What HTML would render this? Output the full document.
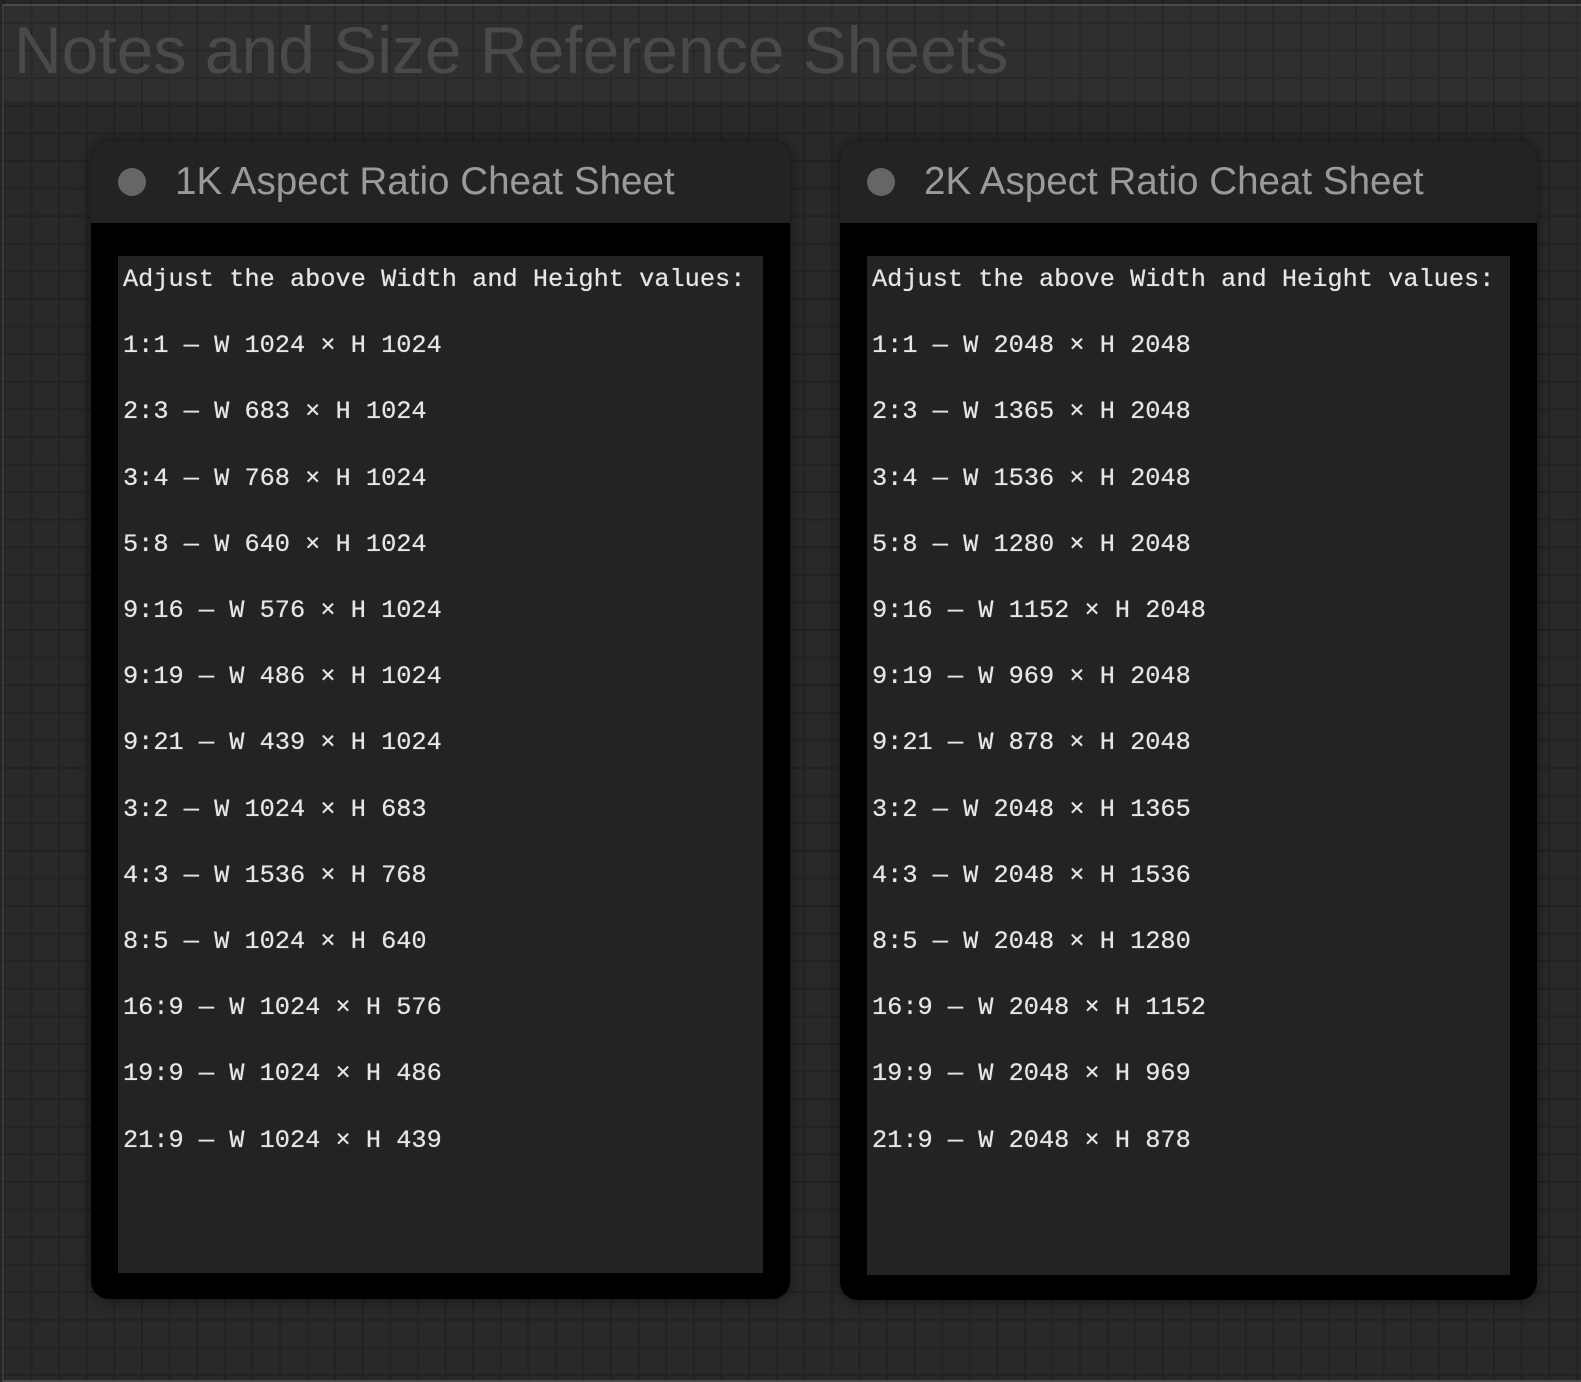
<!DOCTYPE html>
<html><head><style>
html,body{margin:0;padding:0;}
body{width:1581px;height:1381px;overflow:hidden;background-color:#262626;
background-image:linear-gradient(#1f1f1f 2px,transparent 2px),linear-gradient(90deg,#1f1f1f 2px,transparent 2px);
background-size:27.6px 27.6px;background-position:3px 22px;position:relative;font-family:"Liberation Sans",sans-serif;}
.group{position:absolute;left:2px;top:4px;width:1577px;height:1374px;border-top:2px solid #4a4a4a;border-left:2px solid #3a3a3a;border-bottom:2px solid #4a4a4a;background:rgba(255,255,255,0.015);}
.gh{position:absolute;left:0;top:0;right:0;height:95px;background:rgba(255,255,255,0.03);}
.gt{position:absolute;left:10px;top:6px;font-size:66px;color:#4a4a4a;white-space:nowrap;}
.node{position:absolute;top:141px;background:#000;border-radius:18px;box-shadow:0 0 12px rgba(0,0,0,.5);overflow:hidden;}
.hd{height:82px;background:#232323;position:relative;}
.dot{position:absolute;left:27px;top:27px;width:28px;height:28px;border-radius:50%;background:#666;}
.ht{position:absolute;left:84px;top:19px;font-size:38.6px;color:#9a9a9a;white-space:nowrap;}
.ta{position:absolute;left:27px;top:115px;background:#232323;}
pre{margin:-9px 0 0 0;padding:0 0 0 5px;font-family:"Liberation Mono",monospace;font-size:25.3px;line-height:66.2px;color:#e6e6e6;text-shadow:0 0 0.6px #e6e6e6;}
</style></head><body>
<div class="group"><div class="gh"></div><div class="gt">Notes and Size Reference Sheets</div></div>
<div class="node" style="left:91px;width:699px;height:1158px">
<div class="hd"><div class="dot"></div><div class="ht">1K Aspect Ratio Cheat Sheet</div></div>
<div class="ta" style="width:645px;height:1017px"><pre>Adjust the above Width and Height values:
1:1 — W 1024 × H 1024
2:3 — W 683 × H 1024
3:4 — W 768 × H 1024
5:8 — W 640 × H 1024
9:16 — W 576 × H 1024
9:19 — W 486 × H 1024
9:21 — W 439 × H 1024
3:2 — W 1024 × H 683
4:3 — W 1536 × H 768
8:5 — W 1024 × H 640
16:9 — W 1024 × H 576
19:9 — W 1024 × H 486
21:9 — W 1024 × H 439</pre></div>
</div>
<div class="node" style="left:840px;width:697px;height:1159px">
<div class="hd"><div class="dot"></div><div class="ht">2K Aspect Ratio Cheat Sheet</div></div>
<div class="ta" style="width:643px;height:1019px"><pre>Adjust the above Width and Height values:
1:1 — W 2048 × H 2048
2:3 — W 1365 × H 2048
3:4 — W 1536 × H 2048
5:8 — W 1280 × H 2048
9:16 — W 1152 × H 2048
9:19 — W 969 × H 2048
9:21 — W 878 × H 2048
3:2 — W 2048 × H 1365
4:3 — W 2048 × H 1536
8:5 — W 2048 × H 1280
16:9 — W 2048 × H 1152
19:9 — W 2048 × H 969
21:9 — W 2048 × H 878</pre></div>
</div>
</body></html>
